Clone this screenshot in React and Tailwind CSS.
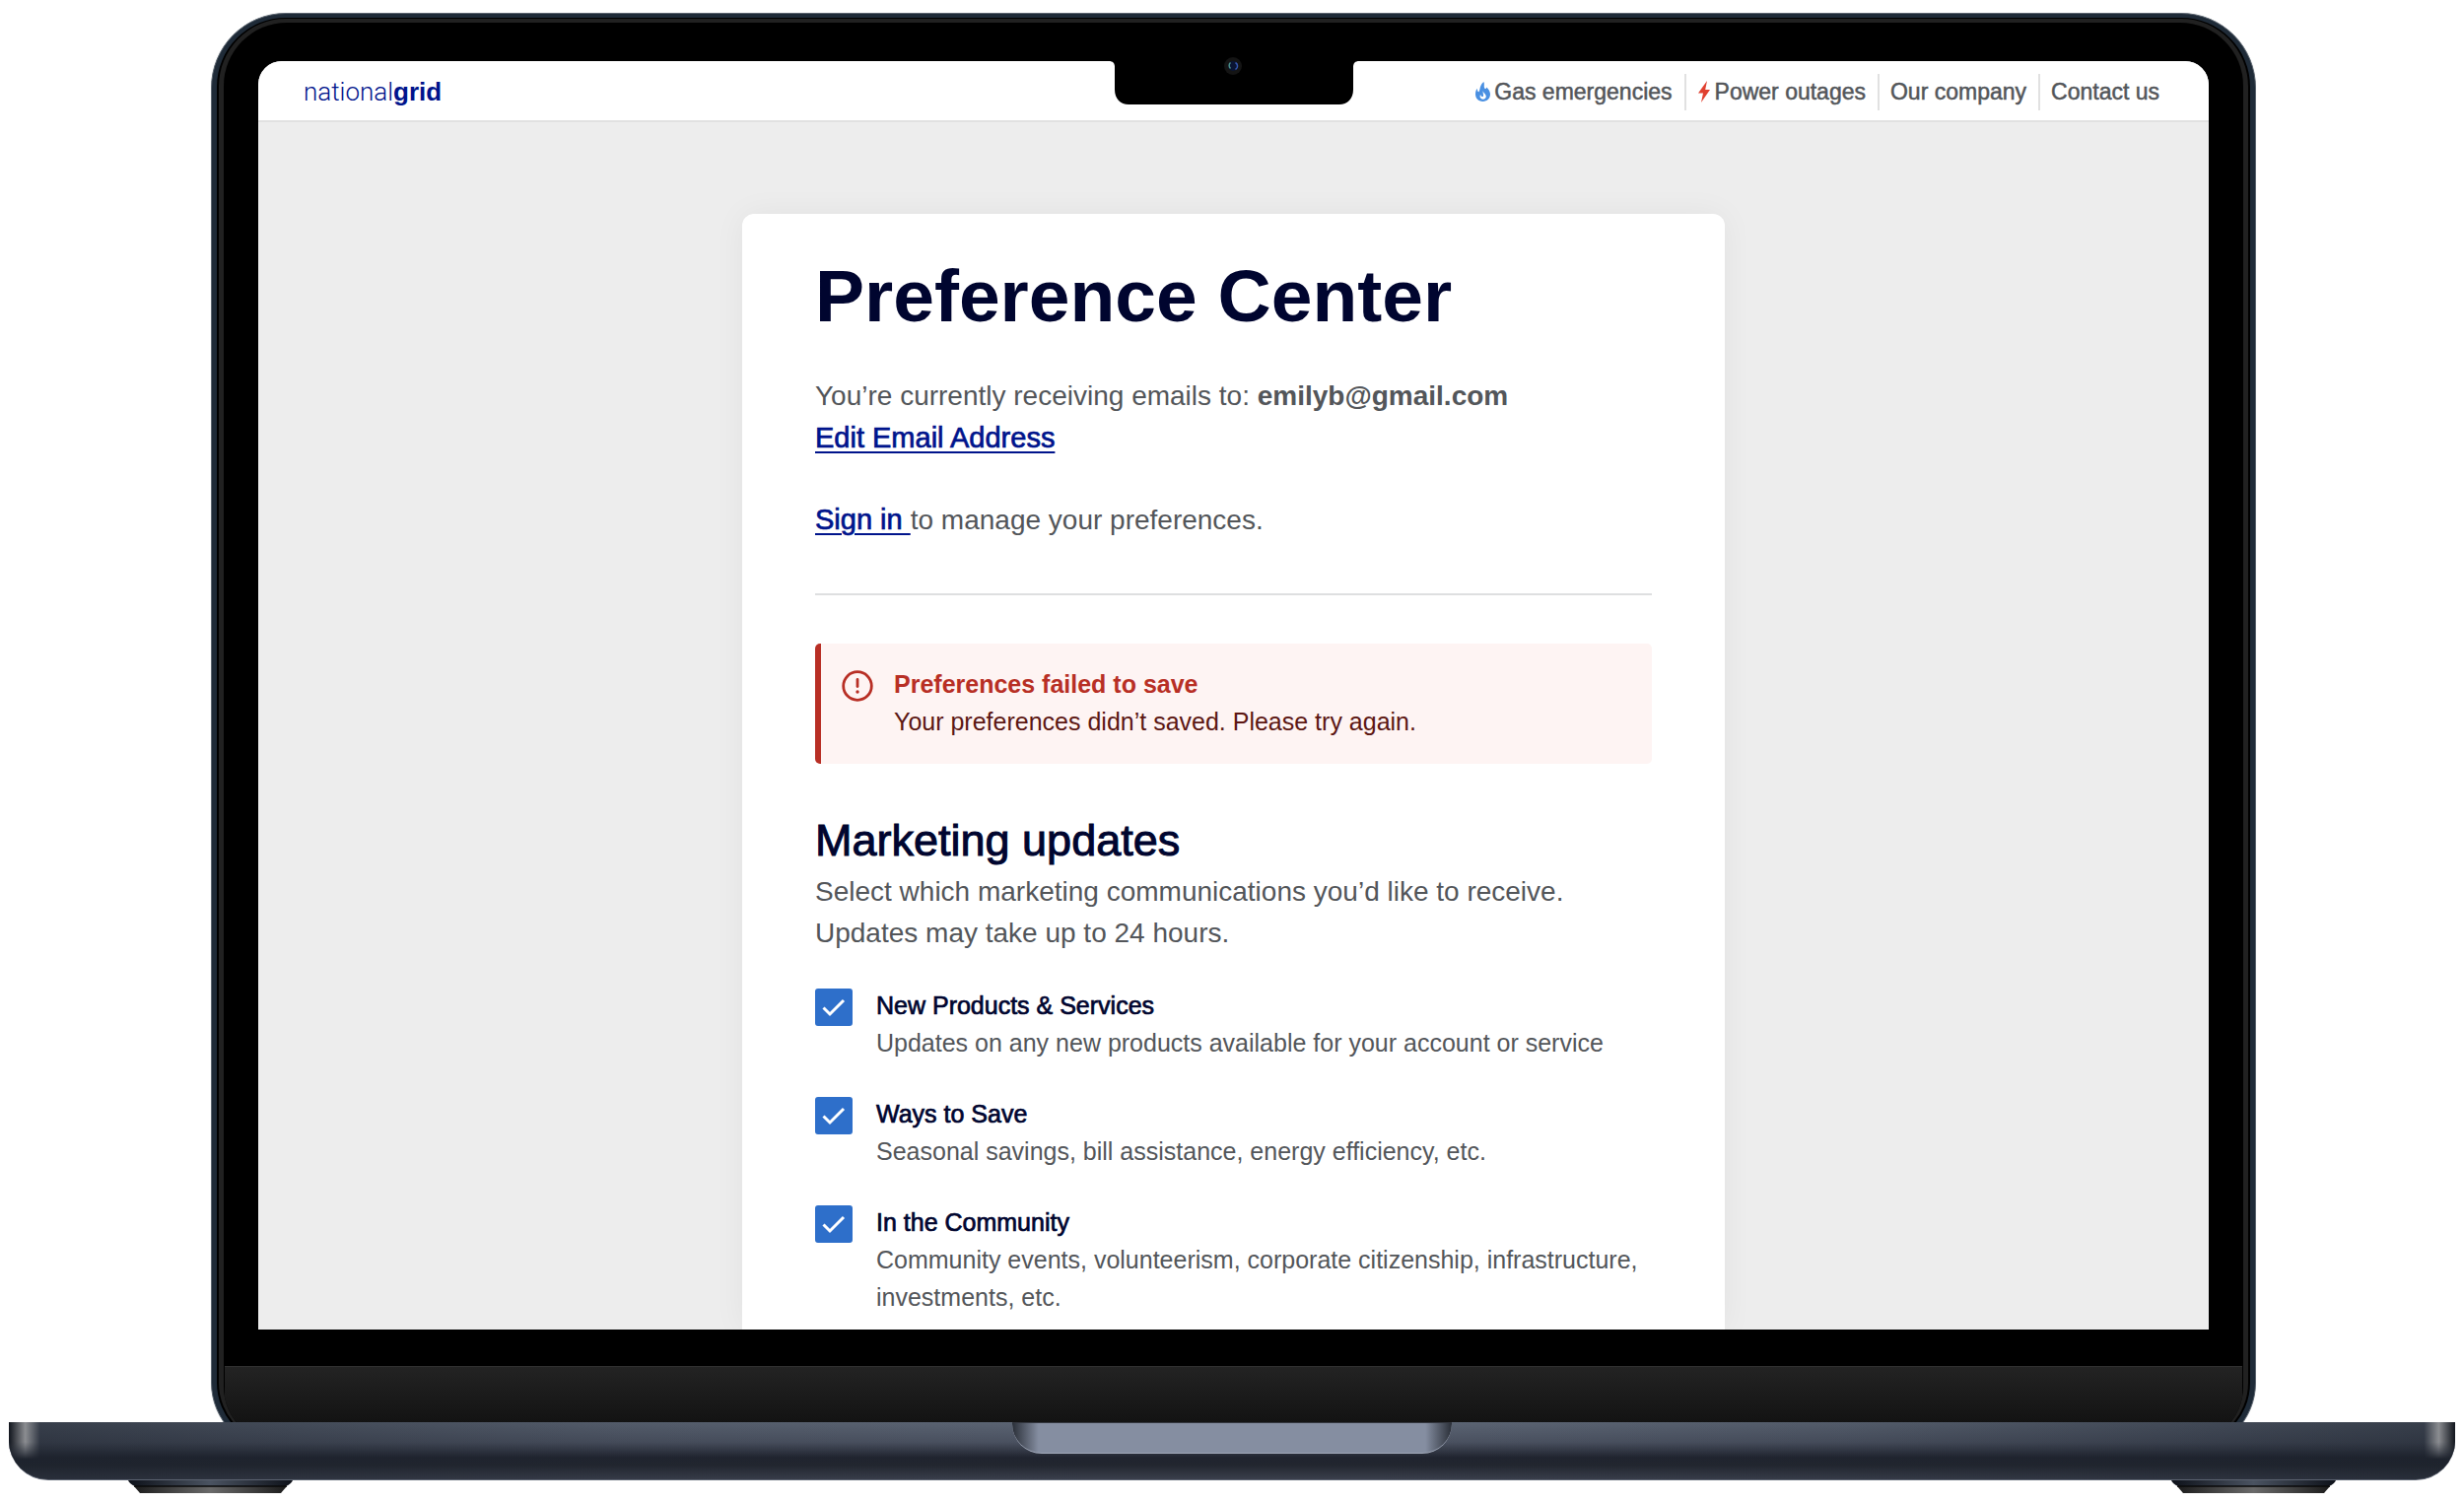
const updates = [
  {
    id: 'products',
    title: 'New Products & Services',
    text: 'Updates on any new products available for your account or service',
  },
  {
    id: 'save',
    title: 'Ways to Save',
    text: 'Seasonal savings, bill assistance, energy efficiency, etc.',
  },
  {
    id: 'community',
    title: 'In the Community',
    text: 'Community events, volunteerism, corporate citizenship, infrastructure, investments, etc.',
  },
];

function FlameIcon() {
  return (
    <svg viewBox="0 0 15 20" className="h-5 w-[15px]" aria-hidden="true">
      <path
        fill="#4a90e2"
        d="M8.500 0C9.400 3 8.200 4.800 9.300 6.500c.8 1 1.800.6 1.900-1C13.400 7.200 15 10 15 12.600 15 17 12 20 7.500 20S0 17 0 12.600C0 10.200.6 8.200 1.800 6.800c0 2 .6 3.300 1.700 3.500C5 8 4 3.400 8.500 0Z"
      />
      <path
        fill="#fff"
        d="M7.600 9c.2 2.200 3.200 3.300 3.200 5.800 0 1.700-1.300 2.900-3 2.900-1.900 0-3.200-1.200-3.200-2.900 0-.7.2-1.300.5-1.800.3 1.300 1.100 2.200 2.100 2.100 1.700-.2.200-3.600.4-6.100Z"
      />
    </svg>
  );
}

function BoltIcon() {
  return (
    <svg viewBox="0 0 14 22" className="h-[22px] w-3.5" aria-hidden="true">
      <path fill="#e0402f" d="M10 0 1 12.500h5L4 22l9-13H8.200L10 0Z" />
    </svg>
  );
}

function AlertIcon() {
  return (
    <svg viewBox="0 0 32 32" className="size-8 shrink-0" fill="none" aria-hidden="true">
      <circle cx="16" cy="16" r="14.300" stroke="#b82f25" strokeWidth="2.800" />
      <path d="M16 9.500v7" stroke="#b82f25" strokeWidth="2.800" strokeLinecap="round" />
      <circle cx="16" cy="22" r="1.700" fill="#b82f25" />
    </svg>
  );
}

function NavLink({ icon, children }) {
  return (
    <li className="flex h-[37px] items-center border-l-2 border-[#e1e1e1] pr-3 pl-[11px] first:border-l-0 last:pr-0">
      <a href="#" className="flex items-center gap-1 text-[23px] [-webkit-text-stroke:0.5px]">
        {icon}
        {children}
      </a>
    </li>
  );
}

function Header() {
  return (
    <header className="flex h-[62px] items-center justify-between rounded-t-[24px] border-b-2 border-[#e1e1e1] bg-white pt-[2px] pr-[50px] pl-[46px]">
      <a href="#" className="flex items-baseline text-[#00148c]">
        <span className="font-['Roboto'] text-[26px] font-light">national</span>
        <span className="text-[26px] font-bold">grid</span>
      </a>
      <nav aria-label="Main">
        <ul className="flex items-center text-[#53565a]">
          <NavLink icon={<FlameIcon />}>Gas emergencies</NavLink>
          <NavLink icon={<BoltIcon />}>Power outages</NavLink>
          <NavLink>Our company</NavLink>
          <NavLink>Contact us</NavLink>
        </ul>
      </nav>
    </header>
  );
}

function CheckRow({ id, title, text }) {
  return (
    <li className="flex gap-6 text-[25px] leading-[38px]">
      <span className="mt-[2px] grid size-[38px] shrink-0">
        <input
          id={id}
          type="checkbox"
          defaultChecked
          aria-describedby={id + '-text'}
          className="peer col-start-1 row-start-1 size-[38px] appearance-none rounded-[3px] border-2 border-[#2e6fca] bg-white checked:bg-[#2e6fca]"
        />
        <svg
          viewBox="0 0 38 38"
          className="pointer-events-none invisible col-start-1 row-start-1 size-[38px] peer-checked:visible"
          fill="none"
          aria-hidden="true"
        >
          <path d="m8.500 19.500 6.500 6.500L29 12" stroke="#fff" strokeWidth="3" />
        </svg>
      </span>
      <div>
        <label htmlFor={id} className="block text-[#00052f] [-webkit-text-stroke:0.7px]">
          {title}
        </label>
        <p id={id + '-text'}>{text}</p>
      </div>
    </li>
  );
}

function PreferenceCard() {
  return (
    <main className="mx-auto mt-[93px] w-full max-w-[997px] flex-1 rounded-t-xl bg-white px-[74px] pt-[38px] pb-3 text-[28px] leading-[42px] text-[#53565a] shadow-[0_0_32px_rgba(0,0,0,0.05)]">
      <h1 className="text-[75px] leading-[90px] font-bold text-[#00052f]">Preference Center</h1>
      <p className="mt-9">
        You’re currently receiving emails to: <strong>emilyb@gmail.com</strong>
      </p>
      <p>
        <a href="#" className="text-[29px] text-[#00148c] underline decoration-2 underline-offset-4 [-webkit-text-stroke:0.7px]">
          Edit Email Address
        </a>
      </p>
      <p className="mt-10">
        <a href="#" className="text-[29px] whitespace-pre text-[#00148c] underline decoration-2 underline-offset-4 [-webkit-text-stroke:0.7px]">
          {'Sign in '}
        </a>
        to manage your preferences.
      </p>
      <hr className="mt-[53px] border-t-2 border-[#dedfe0]" />
      <div role="alert" className="mt-[49px] flex gap-[21px] overflow-hidden rounded-[5px] border-l-[6px] border-[#b82f25] bg-[#fef4f3] pt-[22px] pb-6 pl-[21px] text-[25px] leading-[38px]">
        <div className="pt-[5px]">
          <AlertIcon />
        </div>
        <div>
          <p className="font-bold text-[#b82f25]">Preferences failed to save</p>
          <p className="text-[#5c1713]">Your preferences didn’t saved. Please try again.</p>
        </div>
      </div>
      <h2 className="mt-[52px] text-[45px] leading-[52px] text-[#00052f] [-webkit-text-stroke:1px]">Marketing updates</h2>
      <p className="mt-[5px]">
        Select which marketing communications you’d like to receive.
        <br />
        Updates may take up to 24 hours.
      </p>
      <ul className="mt-[33px] flex flex-col gap-[34px]">
        {updates.map((item) => (
          <CheckRow key={item.id} {...item} />
        ))}
      </ul>
    </main>
  );
}

function CameraNotch() {
  return (
    <div className="absolute inset-x-0 top-0 flex justify-center" aria-hidden="true">
      <svg viewBox="0 0 254 44" className="h-11 w-[254px]">
        <path d="M0 0h254c-4 0-6 2-6 6v23c0 9-6 15-14 15H20C12 44 6 38 6 29V6C6 2 4 0 0 0Z" fill="#000" />
      </svg>
      <svg viewBox="0 0 20 20" className="absolute -top-[5px] size-5">
        <circle cx="9" cy="10" r="9" fill="#141414" />
        <circle cx="9" cy="10" r="5" fill="#0a1433" />
        <path d="M6.500 6.500a4 4 0 0 0 0 6" stroke="#4b8f86" strokeWidth="1.500" fill="none" />
        <path d="M11.500 6.500a4 4 0 0 1 0 7" stroke="#3557b0" strokeWidth="1.500" fill="none" />
      </svg>
    </div>
  );
}

function Foot() {
  return (
    <svg viewBox="0 0 167 13" className="h-[13px] w-[167px]" aria-hidden="true">
      <defs>
        <linearGradient id="foot-top">
          <stop offset="0" stopColor="#0d1119" />
          <stop offset="0.500" stopColor="#4a5361" />
          <stop offset="1" stopColor="#0d1119" />
        </linearGradient>
        <linearGradient id="foot-pad">
          <stop offset="0" stopColor="#1c1c1c" />
          <stop offset="0.500" stopColor="#6a6a6a" />
          <stop offset="1" stopColor="#1c1c1c" />
        </linearGradient>
      </defs>
      <path d="M0 0h167c-2 4-6 6-11 7H11C6 6 2 4 0 0Z" fill="url(#foot-top)" />
      <path d="M6 6h155l-6 7H12Z" fill="url(#foot-pad)" />
      <path d="M6 6h155" stroke="#0a0a0a" strokeWidth="1.500" />
    </svg>
  );
}

function LaptopBase() {
  return (
    <div className="px-[9px] pb-[9px]" aria-hidden="true">
      <div className="relative h-[59px] overflow-hidden rounded-b-[40px] border-b border-[#5b6270] bg-[linear-gradient(180deg,#5d6675_0%,#4b5261_35%,#20242f_62%,#22262f_75%,#3a3f4c_100%)]">
        <div className="absolute inset-0 bg-[linear-gradient(90deg,rgba(28,34,44,0.6)_0%,rgba(28,34,44,0.15)_25%,transparent_45%,transparent_55%,rgba(28,34,44,0.15)_75%,rgba(28,34,44,0.6)_100%)]" />
        <div className="absolute top-0 left-0 h-full w-[44px] bg-[linear-gradient(90deg,#11151d_0%,#8b8d91_38%,transparent_72%)] [mask-image:linear-gradient(180deg,#000_35%,transparent_65%)]" />
        <div className="absolute top-0 right-0 h-full w-[44px] bg-[linear-gradient(270deg,#11151d_0%,#8b8d91_38%,transparent_72%)] [mask-image:linear-gradient(180deg,#000_35%,transparent_65%)]" />
        <div className="relative mx-auto h-8 w-[446px] rounded-b-[30px] border-t border-b border-t-[#33373f] border-b-[#a0a8b8] bg-[linear-gradient(90deg,#2a2f38_0%,#858ea1_6%,#858ea1_94%,#2a2f38_100%)]" />
      </div>
      <div className="flex justify-between px-[121px]">
        <Foot />
        <Foot />
      </div>
    </div>
  );
}

export default function App() {
  return (
    <div className="flex min-h-screen flex-col bg-white pt-[13px] font-['Liberation_Sans',Arial,sans-serif]">
      <div className="flex flex-1 flex-col overflow-hidden pr-[211px] pl-[214px]">
        <div className="-mb-[30px] flex flex-1 flex-col overflow-hidden rounded-t-[76px] rounded-b-[70px] border border-[#5d6670] bg-[#1f2b38] p-[5px] pt-1">
          <div className="flex flex-1 flex-col overflow-hidden rounded-t-[70px] rounded-b-[64px] border-2 border-t border-black bg-[#212121] px-[5px] pt-1">
            <div className="flex flex-1 flex-col overflow-hidden rounded-t-[64px] rounded-b-[58px] bg-black px-px pt-[39px]">
              <div className="relative mx-[34px] flex flex-1 flex-col rounded-t-[24px] bg-[#ededed]">
                <Header />
                <PreferenceCard />
                <CameraNotch />
              </div>
              <div className="mt-[37px] h-[79px] shrink-0 border-t border-[#303030] bg-[linear-gradient(180deg,#232323_0%,#131313_72%)]" />
            </div>
          </div>
        </div>
      </div>
      <LaptopBase />
    </div>
  );
}
